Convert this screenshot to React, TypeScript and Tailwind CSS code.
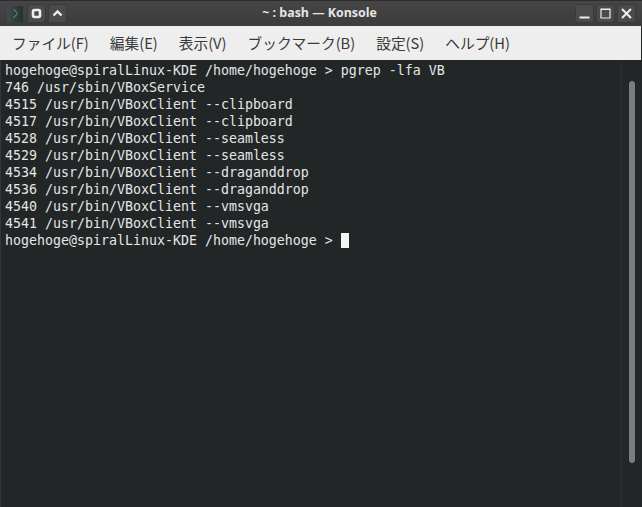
const lines = [
  "hogehoge@spiralLinux-KDE /home/hogehoge > pgrep -lfa VB",
  "746 /usr/sbin/VBoxService",
  "4515 /usr/bin/VBoxClient --clipboard",
  "4517 /usr/bin/VBoxClient --clipboard",
  "4528 /usr/bin/VBoxClient --seamless",
  "4529 /usr/bin/VBoxClient --seamless",
  "4534 /usr/bin/VBoxClient --draganddrop",
  "4536 /usr/bin/VBoxClient --draganddrop",
  "4540 /usr/bin/VBoxClient --vmsvga",
  "4541 /usr/bin/VBoxClient --vmsvga",
]

const menus = ["ファイル(F)", "編集(E)", "表示(V)", "ブックマーク(B)", "設定(S)", "ヘルプ(H)"]

function TitleButton({ children }: { children: React.ReactNode }) {
  return (
    <div className="w-[19px] h-[19px] rounded-[3px] bg-[#4b4b4b] border border-[#3a3a3a] flex items-center justify-center">
      <svg width="13" height="13" viewBox="0 0 13 13" fill="none" stroke="#eeeeee">
        {children}
      </svg>
    </div>
  )
}

export default function App() {
  return (
    <div className="w-[642px] h-[507px] flex flex-col bg-[#222627] overflow-hidden">
      {/* タイトルバー */}
      <div className="h-[26px] shrink-0 flex items-center justify-between pl-[7px] pr-[6px] bg-gradient-to-b from-[#454545] to-[#3c3c3c] border-t border-[#2c2c2c]">
        <div className="flex items-center gap-[2px]">
          <div className="w-[16px] h-[16px] mr-[2px] bg-gradient-to-r from-[#3f4f50] to-[#263031] flex items-center justify-center">
            <svg width="9" height="11" viewBox="0 0 9 11" fill="none" stroke="#7d908e" strokeWidth="1">
              <path d="M2.5 1 L6.5 5.5 L2.5 10" />
            </svg>
          </div>
          <TitleButton>
            <rect x="3" y="3" width="7" height="7" rx="1.5" strokeWidth="2.6" />
          </TitleButton>
          <TitleButton>
            <path d="M2.5 8.5 L6.5 4.5 L10.5 8.5" strokeWidth="2.4" />
          </TitleButton>
        </div>
        <div className="font-['Open_Sans','Noto_Sans',sans-serif] text-[12.4px] font-bold text-[#e6e6e6] -ml-[3px]">
          ~ : bash — Konsole
        </div>
        <div className="flex items-center gap-[2px]">
          <TitleButton>
            <path d="M1.5 10.5 H11.5" strokeWidth="2" />
          </TitleButton>
          <TitleButton>
            <path d="M2 2 H11 V11 H2 Z M2 2.5 H11" strokeWidth="1.2" />
          </TitleButton>
          <TitleButton>
            <path d="M2 2 L11 11 M11 2 L2 11" strokeWidth="2" />
          </TitleButton>
        </div>
      </div>

      {/* メニューバー */}
      <div className="h-[34px] shrink-0 flex items-center pl-[12px] gap-[21px] bg-[#eeeeee] mr-[1px] font-['Noto_Sans_CJK_JP',sans-serif] text-[14.7px] text-[#3a3a3a]">
        {menus.map((m) => (
          <span key={m}>{m}</span>
        ))}
      </div>

      {/* 端末 */}
      <div className="flex-1 flex bg-[#222627] border-l border-[#333738]">
        <div className="flex-1 pl-[4px] pt-[2px] font-['DejaVu_Sans_Mono',monospace] text-[13.29px] leading-[17px] text-[#e4e6e6] whitespace-pre">
          {lines.map((l, i) => (
            <div key={i} className="h-[17px]">{l}</div>
          ))}
          <div className="h-[17px] flex items-center">
            <span>{"hogehoge@spiralLinux-KDE /home/hogehoge > "}</span>
            <span className="w-[8px] h-[15px] bg-[#f5f5f5]" />
          </div>
        </div>
        <div className="w-[21px] shrink-0 border-l border-[#2b2f30] pt-[21px] pb-[44px] pl-[7px]">
          <div className="w-[6px] h-full rounded-full bg-[#7a7d7d]" />
        </div>
      </div>
    </div>
  )
}
